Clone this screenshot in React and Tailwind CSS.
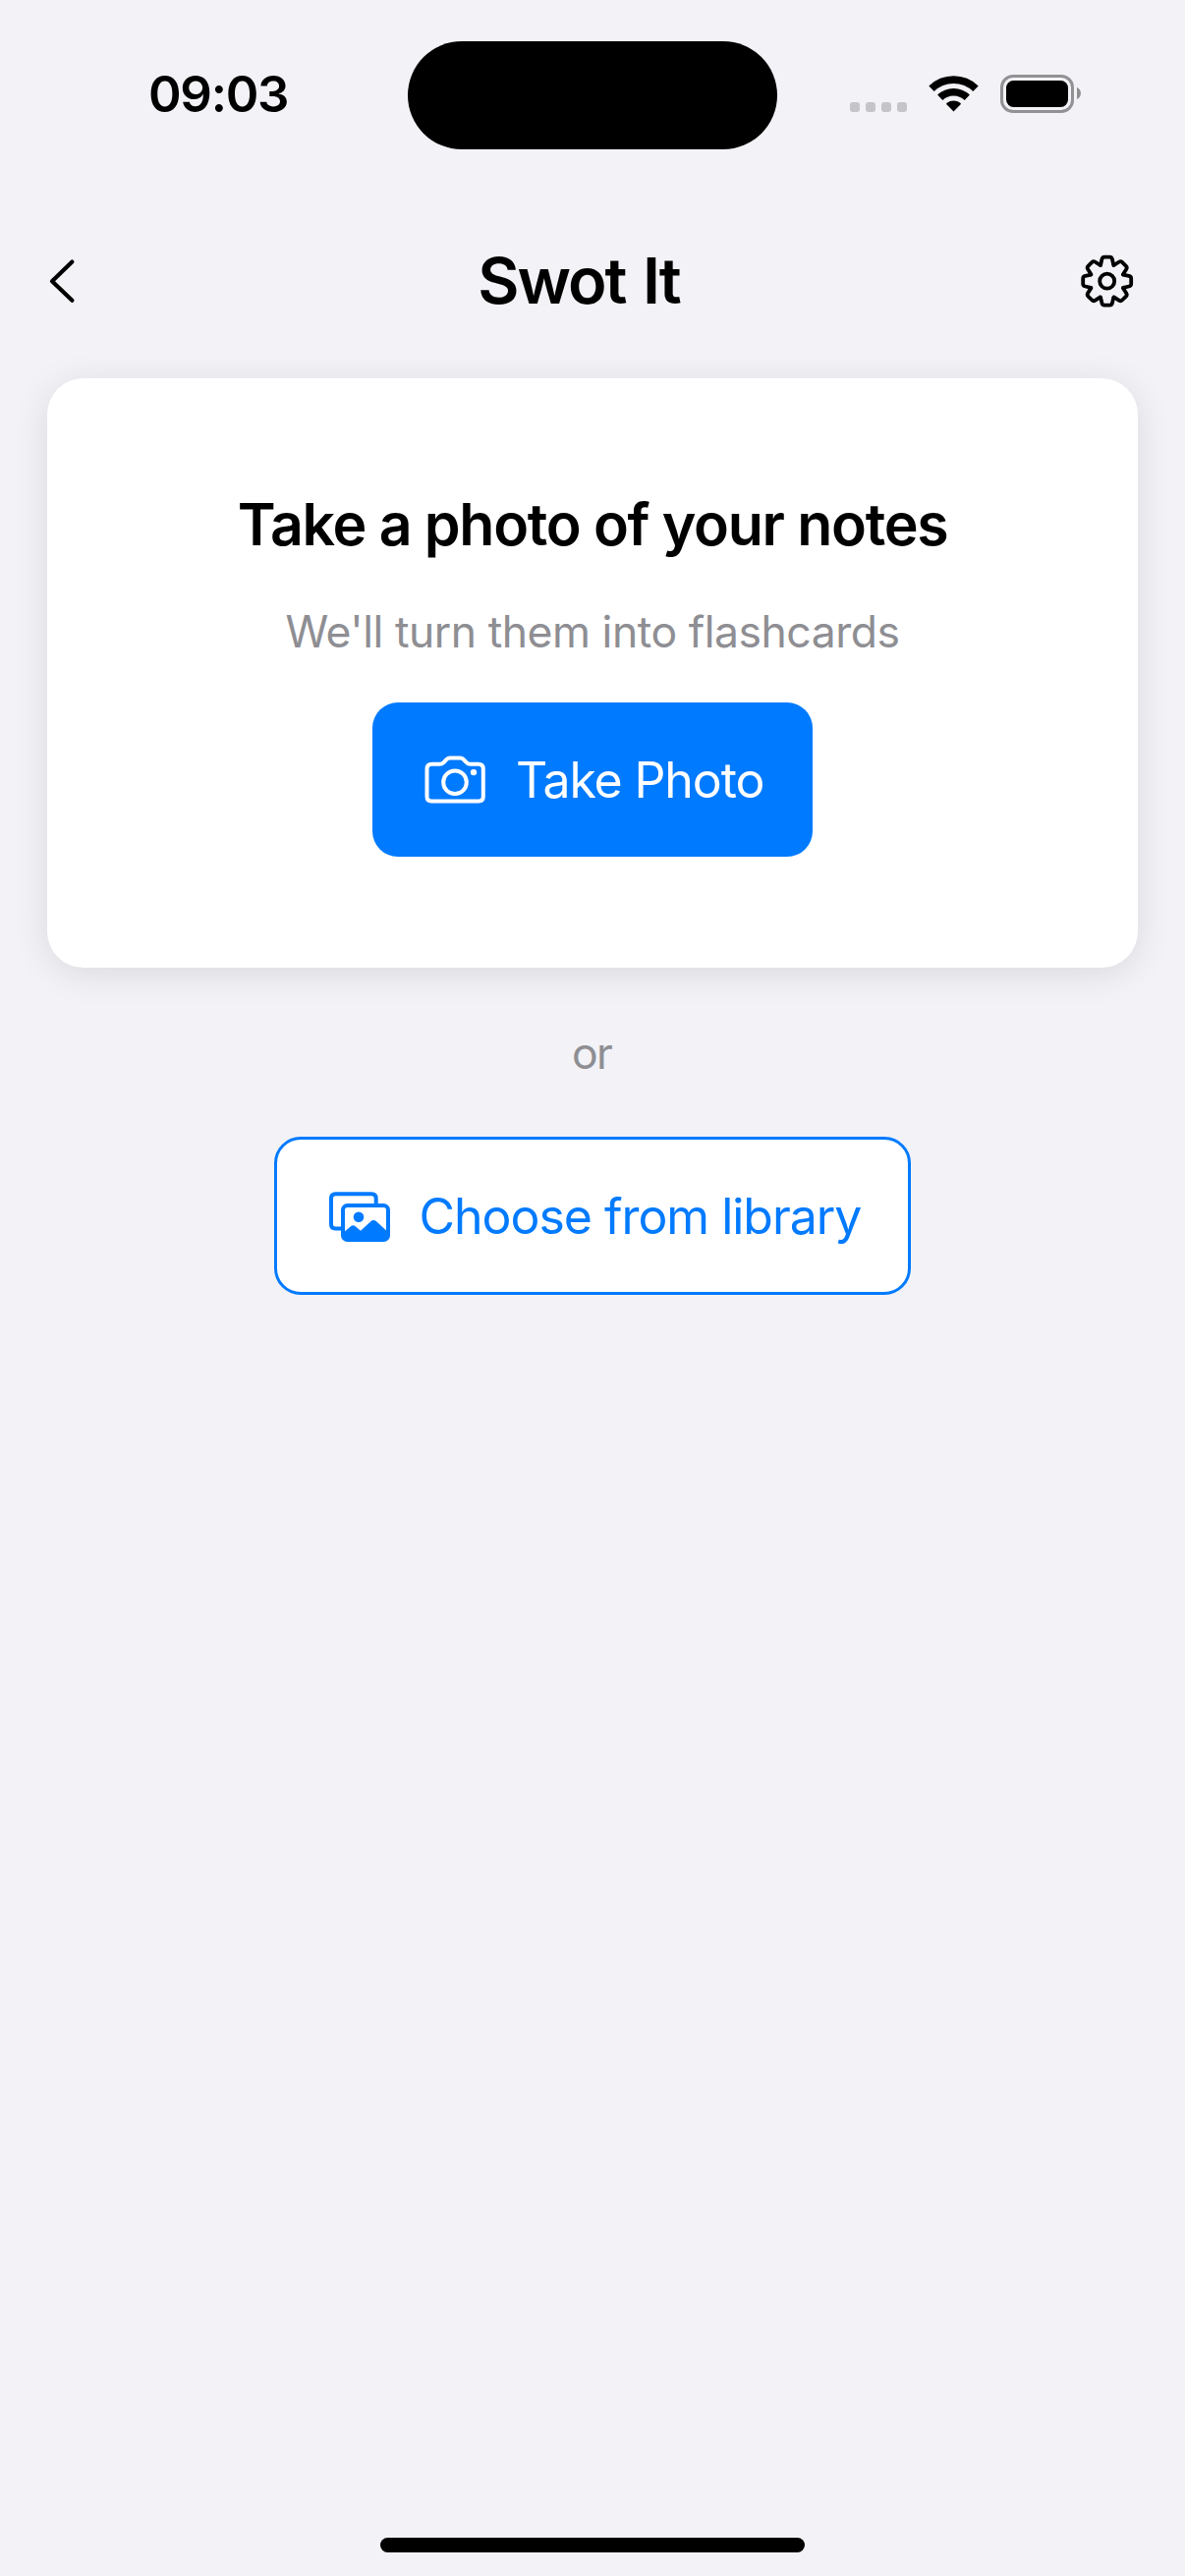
import React from "react";

function StatusBar() {
  return (
    <div className="relative flex h-[187px] items-start justify-between pr-[106px] pl-[151px]">
      <div className="mt-[66px] text-[51px] leading-[60px] font-semibold tracking-[-1.3px]">09:03</div>
      <div className="absolute top-[42px] left-[415px] h-[110px] w-[376px] rounded-full bg-black" />
      <div className="mt-[76px] flex items-start">
        <div className="mt-[28px] flex gap-[6px]">
          <span className="size-[10px] rounded-[3px] bg-[#c4c4c9]" />
          <span className="size-[10px] rounded-[3px] bg-[#c4c4c9]" />
          <span className="size-[10px] rounded-[3px] bg-[#c4c4c9]" />
          <span className="size-[10px] rounded-[3px] bg-[#c4c4c9]" />
        </div>
        <svg className="ml-[21px] h-[39px] w-[53px]" viewBox="-26.5 -37.5 53 39" fill="none" stroke="#000">
          <path d="M-22.5 -23.3A32.4 32.4 0 0 1 22.5 -23.3" strokeWidth="7.7" />
          <path d="M-13.8 -14.2A19.8 19.8 0 0 1 13.8 -14.2" strokeWidth="7.5" />
          <path d="M0 0L-7.4 -7.4Q-7.6 -8.2 -6.8 -8.8A11.3 11.3 0 0 1 6.8 -8.8Q7.6 -8.2 7.4 -7.4Z" fill="#000" stroke="none" />
        </svg>
        <div className="ml-[21px] h-[39px] w-[75px] rounded-[13px] border-[3px] border-[#929295] p-[3px]">
          <div className="h-full w-full rounded-[7.5px] bg-black" />
        </div>
        <svg className="mt-[13px] ml-[3px] h-[12px] w-[4px]" viewBox="0 0 4 12" fill="#8f8f92">
          <path d="M0 0C5.3 2.2 5.3 9.8 0 12Z" />
        </svg>
      </div>
    </div>
  );
}

const TOOTH = "M-6.6 -16.4L-5.3 -22.2Q-4.8 -24.5 -2.8 -24.5L2.8 -24.5Q4.8 -24.5 5.3 -22.2L6.6 -16.4";

function GearIcon() {
  return (
    <svg className="h-[60px] w-[60px]" viewBox="-29.7 -30.2 60 60" fill="none" stroke="#000" strokeWidth="3.8" strokeLinecap="round" strokeLinejoin="round">
      <circle r="7.5" />
      {[0, 45, 90, 135, 180, 225, 270, 315].map((a) => (
        <path key={a} d={TOOTH} transform={`rotate(${a})`} />
      ))}
    </svg>
  );
}

function Header() {
  return (
    <header className="flex h-[198px] items-center justify-between pr-[49px] pl-[48px]">
      <svg className="h-[48px] w-[33px]" viewBox="48 262 33 48" fill="none" stroke="#000" strokeWidth="4.2" strokeLinecap="round" strokeLinejoin="round">
        <path d="M73.4 266.6L53 286.2L73.4 305.8" />
      </svg>
      <h1 className="text-[65px] leading-[78px] font-semibold tracking-[-2.1px] [word-spacing:3.5px]">Swot It</h1>
      <GearIcon />
    </header>
  );
}

function CameraIcon() {
  return (
    <svg className="h-[72px] w-[72px]" viewBox="427.5 757.5 72 72" fill="none" stroke="#fff" strokeWidth="4" strokeLinejoin="round">
      <path d="M440 777.3H448.2Q450.4 777.3 452 775.7L454.8 772.7Q456.4 771 458.6 771H468.6Q470.8 771 472.4 772.7L475.2 775.7Q476.8 777.3 479 777.3H487.3Q492.3 777.3 492.3 782.3V810.3Q492.3 815 487.6 815H439.7Q435 815 435 810.3V782.3Q435 777.3 440 777.3Z" />
      <circle cx="463.5" cy="795.7" r="11.8" />
      <circle cx="482.5" cy="785.6" r="3.2" fill="#fff" stroke="none" />
    </svg>
  );
}

function PhotosIcon() {
  return (
    <svg className="h-[72px] w-[72px]" viewBox="330 1201 72 72" fill="none" stroke="#007aff" strokeWidth="4">
      <path d="M348 1249.5H341.5Q337 1249.5 337 1245V1218.8Q337 1214.3 341.5 1214.3H378.2Q382.7 1214.3 382.7 1218.8V1225" />
      <rect x="349" y="1226" width="46" height="35" rx="4.5" />
      <circle cx="365" cy="1237.7" r="5.3" fill="#007aff" stroke="none" />
      <path d="M349.5 1253.5L357.3 1247.1Q359.5 1245.3 361.7 1247.2L367 1251.8L377.3 1242.2Q380.2 1239.7 383.1 1242.2L395 1253.2V1257Q395 1261 391 1261H353Q349 1261 349 1257Z" fill="#007aff" stroke="none" />
    </svg>
  );
}

export default function App() {
  return (
    <div className="flex h-[2622px] w-[1206px] flex-col bg-[#f2f2f7] font-['Inter',sans-serif] text-black">
      <StatusBar />
      <Header />
      <main className="flex flex-1 flex-col items-center">
        <section className="flex h-[600px] w-[1110px] flex-col items-center rounded-[37px] bg-white pt-[113px] shadow-[0_6px_36px_rgba(0,0,0,0.1)]">
          <h2 className="text-[59px] leading-[72px] font-semibold tracking-[-1.297px] whitespace-nowrap">Take a photo of your notes</h2>
          <p className="mt-[46px] text-[44.5px] leading-[54px] tracking-[-0.47px] whitespace-nowrap text-[#8e8e93]">We'll turn them into flashcards</p>
          <button className="mt-[45px] flex h-[157px] w-[448px] items-center rounded-[26px] bg-[#007aff] pl-[48px] text-white">
            <CameraIcon />
            <span className="ml-[26px] text-[50px] leading-[60px] tracking-[-1.13px] whitespace-nowrap">Take Photo</span>
          </button>
        </section>
        <div className="mt-[60px] mr-[2px] text-[44.5px] leading-[54px] tracking-[-1.6px] text-[#8e8e93]">or</div>
        <button className="mt-[58px] flex h-[161px] w-[648px] items-center rounded-[27px] border-[3px] border-[#007aff] bg-white pl-[48px] text-[#007aff]">
          <PhotosIcon />
          <span className="mt-[1px] ml-[24.5px] text-[50px] leading-[60px] tracking-[-1.03px] whitespace-nowrap">Choose from library</span>
        </button>
      </main>
      <div className="mb-[24px] h-[15px] w-[432px] self-center rounded-full bg-black" />
    </div>
  );
}
